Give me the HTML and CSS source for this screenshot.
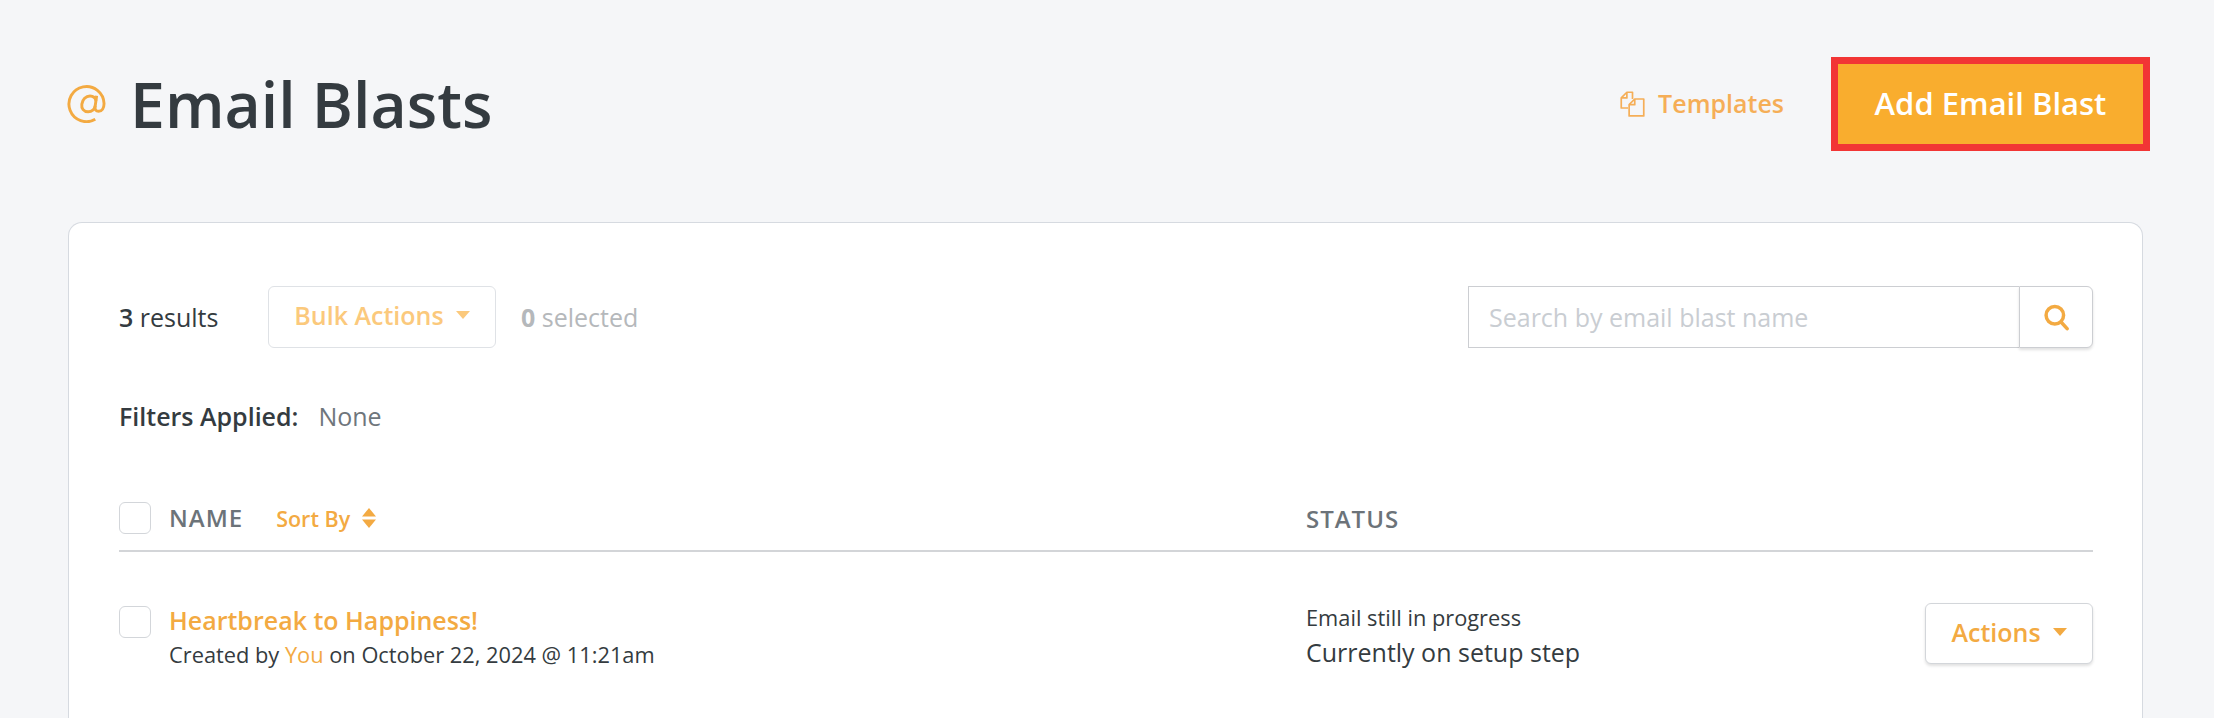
FILE: index.html
```html
<!DOCTYPE html>
<html lang="en">
<head>
  <meta charset="UTF-8">
  <title>Email Blasts</title>
  <link rel="stylesheet" href="styles.css">
</head>
<body>
  <div class="page-head">
    <h1 class="page-title">
      <svg class="title-icon" viewBox="0 0 40 40" fill="none" stroke="#f3aa42" stroke-width="3">
        <path d="M29 36.200A18 18 0 1 1 38 20c0 4.600-2.200 8-5.600 8-2.600 0-4-1.800-3.600-4.600L30.400 12"/>
        <path d="M29 22.500c-.8 3.600-3.800 6-7.400 6-4.400 0-7-3.400-6.400-7.800.6-4.800 4.200-8.400 8.400-8.400 3.400 0 5.600 2.200 6.200 5"/>
      </svg>
      <span>Email Blasts</span>
    </h1>
    <div class="head-actions">
      <a class="templates-link">
        <svg class="templates-icon" viewBox="0 0 24 24" fill="none" stroke="#f5ae57" stroke-width="1.500" stroke-linejoin="round">
          <path d="M8 16H2V7l5-5h5v6"/>
          <path d="M7 2v5H2"/>
          <path d="M9 23V13l5-5h8v15z"/>
          <path d="M14 8v5H9"/>
        </svg>
        Templates
      </a>
      <button class="add-btn">Add Email Blast</button>
    </div>
  </div>

  <div class="card">
    <div class="toolbar">
      <div class="toolbar-left">
        <span class="results"><span class="count">3</span> results</span>
        <button class="bulk-btn">Bulk Actions <span class="caret"></span></button>
        <span class="selected"><strong>0</strong> selected</span>
      </div>
      <div class="search">
        <div class="search-input">Search by email blast name</div>
        <button class="search-btn">
          <svg viewBox="0 0 24 24" width="28" height="28" fill="none" stroke="#f3aa42" stroke-width="3" stroke-linecap="round">
            <circle cx="11" cy="10.500" r="7.500"/>
            <path d="M16.500 16.500l5 5.500"/>
          </svg>
        </button>
      </div>
    </div>

    <div class="filters"><strong>Filters Applied:</strong><span class="filters-value">None</span></div>

    <div class="table-head">
      <div class="col-name">
        <span class="checkbox"></span>
        <span class="th-label th-name">NAME</span>
        <a class="sort-link">Sort By
          <svg class="sort-icon" viewBox="0 0 14 20" fill="#f3aa42"><path d="M7 0l7 8.500H0z"/><path d="M7 20l7-8.500H0z"/></svg>
        </a>
      </div>
      <div class="col-status th-label">STATUS</div>
    </div>

    <div class="row">
      <div class="col-name row-name">
        <span class="checkbox"></span>
        <div>
          <a class="blast-title">Heartbreak to Happiness!</a>
          <div class="blast-meta">Created by <a class="you">You</a> on October 22, 2024 @ 11:21am</div>
        </div>
      </div>
      <div class="col-status">
        <div class="status-top">Email still in progress</div>
        <div class="status-step">Currently on setup step</div>
      </div>
      <button class="actions-btn">Actions <span class="caret"></span></button>
    </div>
  </div>
</body>
</html>
```

FILE: styles.css
```css
* {
  box-sizing: border-box;
}
html, body {
  height: 718px;
  overflow: hidden;
}
body {
  margin: 0;
  padding: 57px 71px 0 68px;
  font-family: "Open Sans", "Liberation Sans", sans-serif;
  background: #f5f6f8;
  color: #343b40;
}
button {
  font-family: inherit;
  cursor: pointer;
}
.page-head {
  display: flex;
  justify-content: space-between;
  align-items: center;
  height: 94px;
  margin-right: -7px;
}
.page-title {
  display: flex;
  align-items: center;
  gap: 24px;
  margin: 0;
  font-size: 62.5px;
  font-weight: 600;
  line-height: 94px;
  color: #343b40;
}
.title-icon {
  width: 39px;
  height: 39px;
  margin: -2px 0 0 -1px;
}
.head-actions {
  display: flex;
  align-items: center;
  gap: 47px;
}
.templates-link {
  display: flex;
  align-items: center;
  gap: 12px;
  padding-bottom: 2px;
  font-size: 25px;
  font-weight: 600;
  color: #f5ae57;
}
.templates-icon {
  width: 27px;
  height: 27px;
}
.add-btn {
  width: 319px;
  height: 94px;
  padding: 0 0 2px;
  background: #f9ad2e;
  color: #fff;
  border: 7px solid #f23535;
  font-size: 31px;
  font-weight: 600;
}
.card {
  height: 496px;
  margin-top: 71px;
  padding: 63px 49px 0 50px;
  background: #fff;
  border: 1px solid #d6dae0;
  border-bottom: none;
  border-radius: 14px 14px 0 0;
}
.toolbar {
  display: flex;
  justify-content: space-between;
  align-items: center;
}
.toolbar-left {
  display: flex;
  align-items: center;
}
.results {
  width: 149px;
  font-size: 25px;
  margin-top: -1px;
}
.count {
  font-weight: 600;
}
.bulk-btn {
  display: flex;
  align-items: center;
  justify-content: center;
  gap: 12px;
  width: 228px;
  height: 62px;
  padding: 0 0 5px;
  background: #fff;
  border: 1px solid #dfe2e6;
  border-radius: 6px;
  font-size: 25px;
  font-weight: 600;
  color: #fbc97c;
}
.bulk-btn .caret {
  border-top-color: #fbc97c;
}
.caret {
  display: inline-block;
  width: 0;
  height: 0;
  border-left: 7px solid transparent;
  border-right: 7px solid transparent;
  border-top: 8px solid #f3aa42;
}
.selected {
  margin: -1px 0 0 25px;
  font-size: 25px;
  color: #b5b8bb;
}
.search {
  display: flex;
  width: 625px;
  height: 62px;
}
.search-input {
  flex: 1;
  padding-left: 20px;
  line-height: 60px;
  font-size: 25px;
  color: #c9cdd2;
  border: 1px solid #ccced2;
  border-right: none;
}
.search-btn {
  display: flex;
  align-items: center;
  justify-content: center;
  width: 74px;
  padding: 0;
  background: #fff;
  border: 1px solid #ccced2;
  border-radius: 0 6px 6px 0;
  box-shadow: 0 2px 3px rgba(0, 0, 0, 0.12);
}
.filters {
  margin-top: 52px;
  font-size: 25px;
  line-height: 32px;
}
.filters strong {
  font-weight: 600;
}
.filters-value {
  margin-left: 20px;
  color: #6f767c;
}
.table-head {
  display: flex;
  align-items: center;
  height: 66px;
  margin-top: 54px;
  border-bottom: 2px solid #d3d5d8;
}
.col-name {
  display: flex;
  align-items: center;
  width: 1187px;
}
.checkbox {
  flex: none;
  width: 32px;
  height: 32px;
  margin-right: 18px;
  background: #fff;
  border: 1px solid #d3d6da;
  border-radius: 6px;
}
.th-label {
  font-size: 24px;
  font-weight: 600;
  letter-spacing: 1px;
  color: #6c7379;
}
.th-name {
  margin-bottom: 2px;
}
.sort-link {
  display: flex;
  align-items: center;
  gap: 12px;
  margin-left: 33px;
  font-size: 21.5px;
  font-weight: 600;
  color: #f3aa42;
}
.sort-icon {
  width: 14px;
  height: 20px;
}
.row {
  display: flex;
  align-items: flex-start;
  padding-top: 51px;
}
.row-name {
  align-items: flex-start;
}
.row-name .checkbox {
  margin-top: 3px;
}
.blast-title {
  display: block;
  font-size: 25px;
  font-weight: 600;
  line-height: 34px;
  color: #f3aa42;
}
.blast-meta {
  margin-top: 2px;
  font-size: 21.8px;
  line-height: 32px;
}
.you {
  color: #f3aa42;
}
.status-top {
  font-size: 21.8px;
  line-height: 30px;
}
.status-step {
  margin-top: 3px;
  font-size: 25px;
  line-height: 32px;
}
.actions-btn {
  display: flex;
  align-items: center;
  justify-content: center;
  gap: 12px;
  width: 168px;
  height: 61px;
  margin-left: auto;
  padding: 0 0 3px;
  background: #fff;
  border: 1px solid #d3d6da;
  border-radius: 6px;
  box-shadow: 0 2px 3px rgba(0, 0, 0, 0.12);
  font-size: 25px;
  font-weight: 600;
  color: #f3aa42;
}
```
